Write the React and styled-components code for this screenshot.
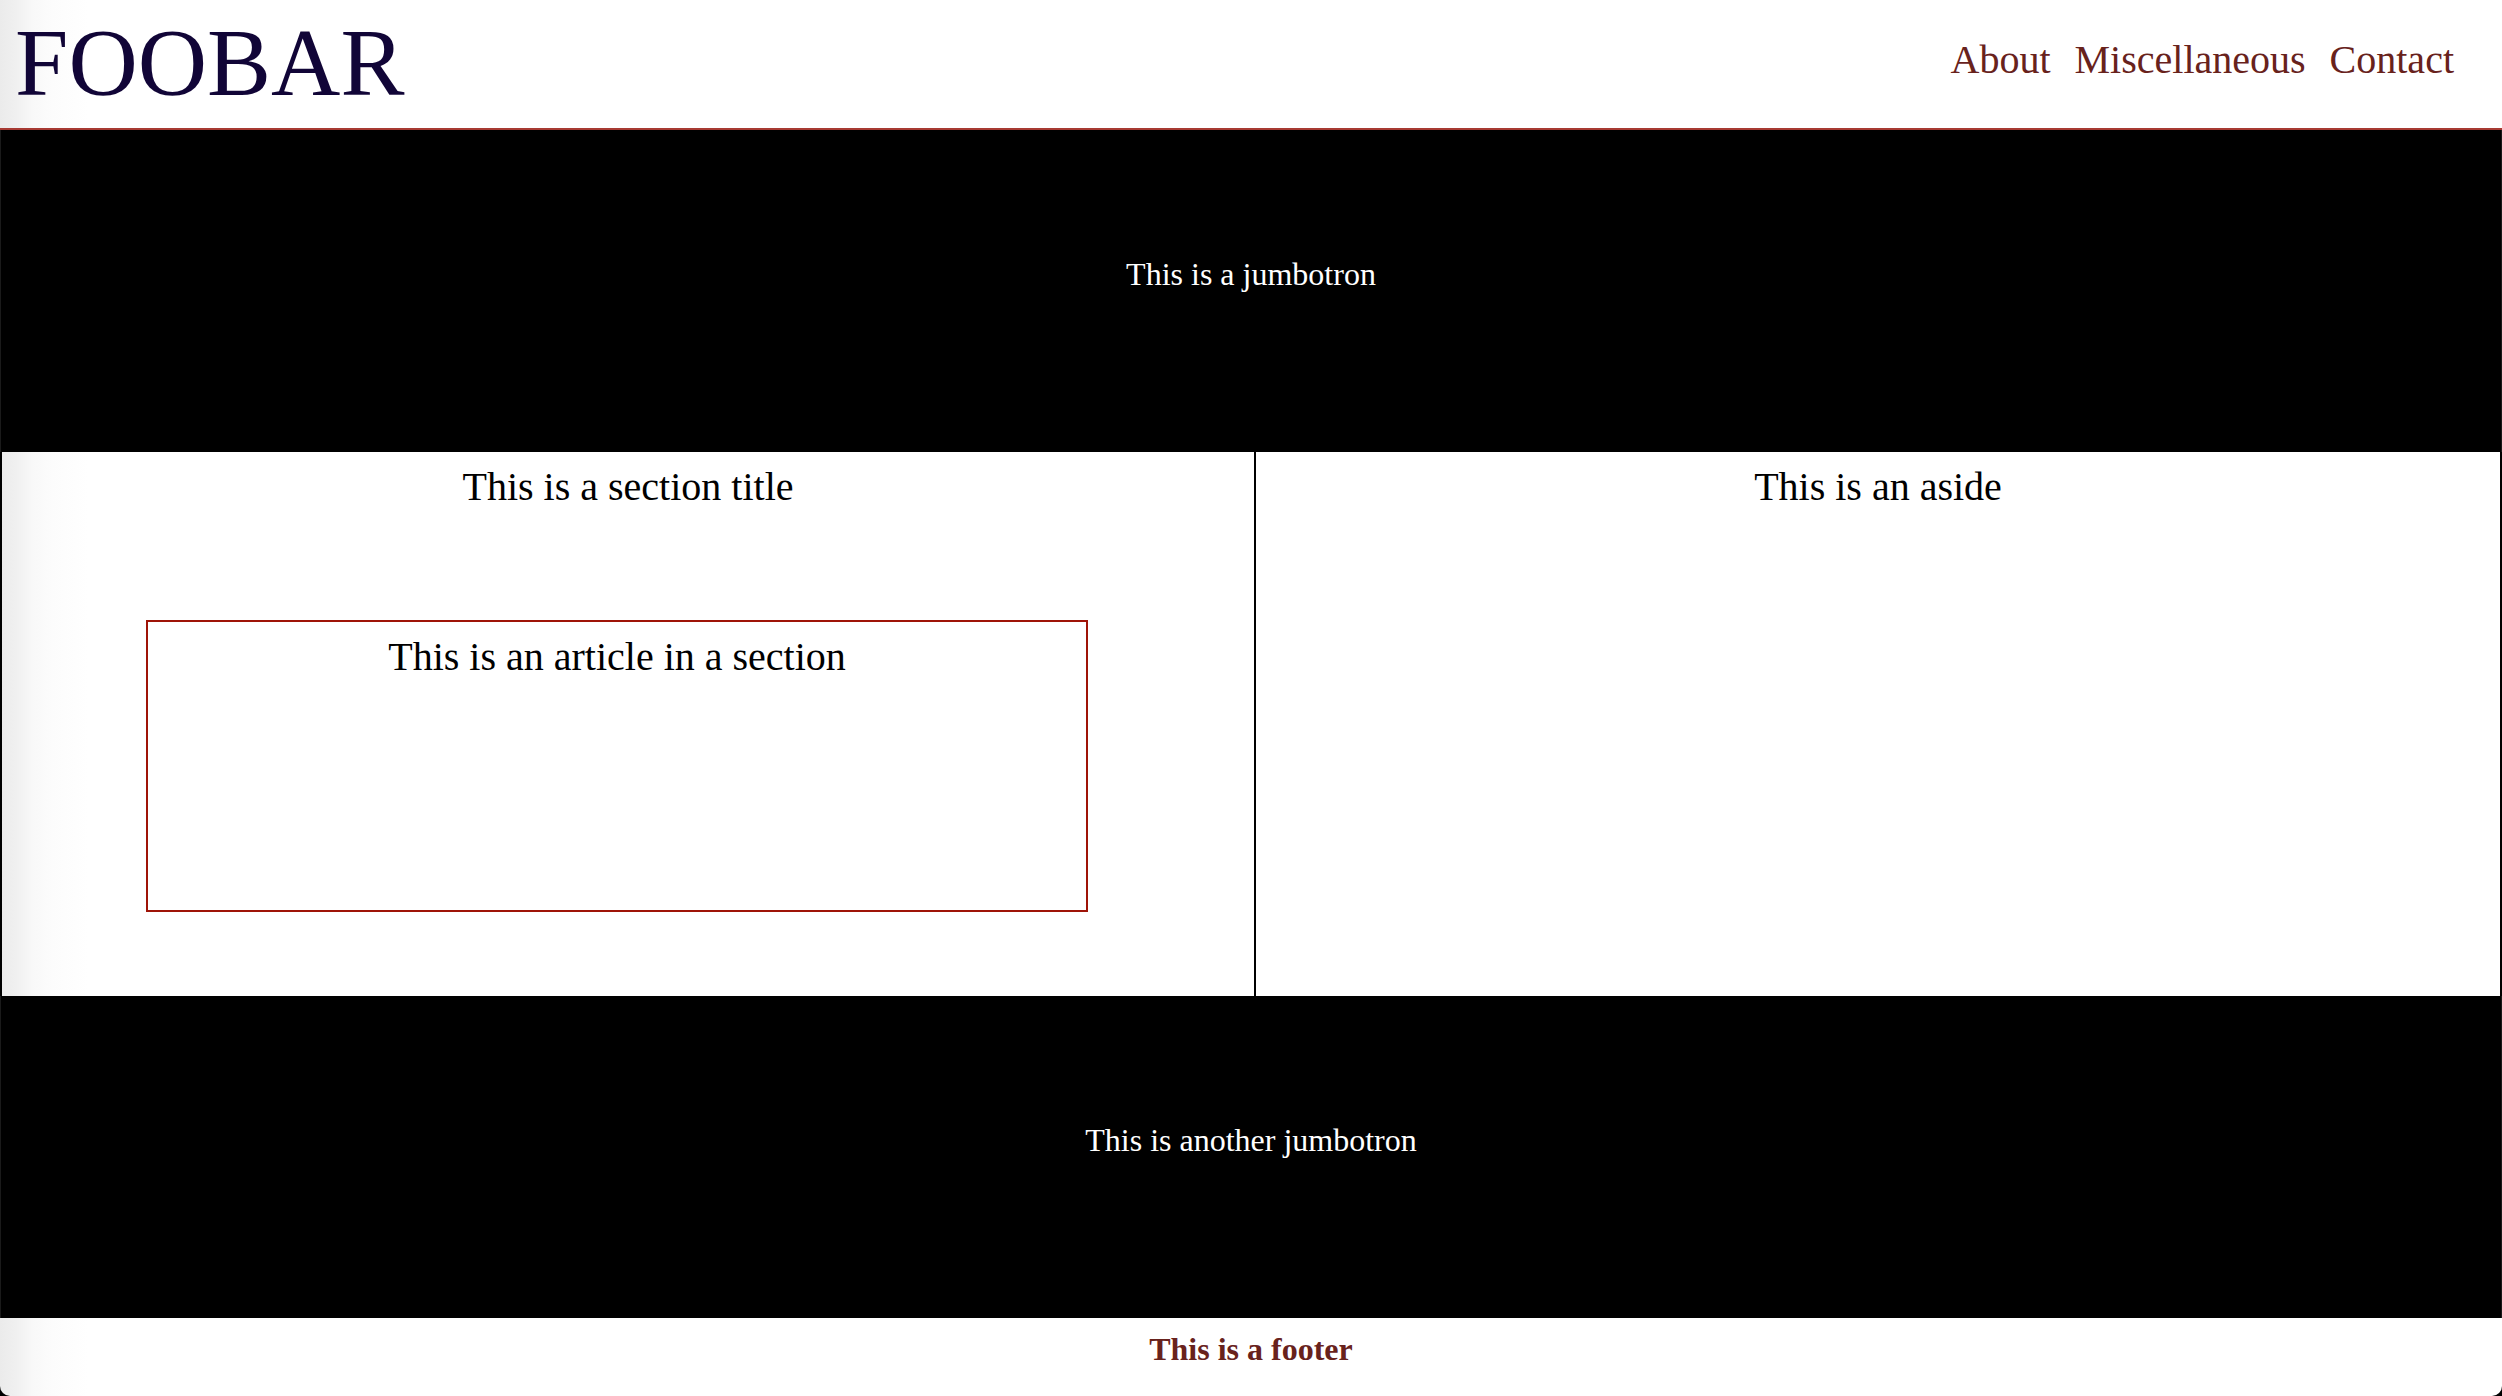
import React from 'react';
import styled, { createGlobalStyle } from 'styled-components';

const Global = createGlobalStyle`
  * { box-sizing: border-box; }
  html { background: #000; }
  body { margin: 0; font-family: "Liberation Serif", "Times New Roman", serif; color: #000; }
`;
const Page = styled.div`
  min-height: 100vh;
  display: flex;
  flex-direction: column;
  background: linear-gradient(to right, #ebebeb, #f0f0f0 16px, #f8f8f8 32px, #fcfcfc 52px, #fefefe 76px, #fff 88px);
  border-radius: 0 0 10px 10px;
`;
const Header = styled.header`
  display: flex;
  justify-content: space-between;
  height: 130px;
  padding: 8px 48px 0 15px;
  border-bottom: 2px solid #a73a33;
`;
const Brand = styled.h1`
  margin: 0;
  font-size: 96px;
  line-height: 110px;
  font-weight: 400;
  color: #110537;
`;
const Nav = styled.nav`
  display: flex;
  gap: 24px;
  padding-top: 28px;
`;
const NavLink = styled.a`
  font-size: 40px;
  line-height: 48px;
  color: #68221c;
  text-decoration: none;
`;
const Jumbotron = styled.section`
  display: flex;
  align-items: center;
  justify-content: center;
  height: 322px;
  padding-bottom: 34px;
  border: solid #1a1a1a;
  border-width: 0 1px;
  background: #000;
  color: #fff;
  font-size: 32px;
  line-height: 36px;
`;
const Columns = styled.main`
  display: grid;
  grid-template-columns: 1254fr 1244fr;
  height: 544px;
  border: solid #000;
  border-width: 0 2px;
`;
const Title = styled.h2`
  margin: 0;
  font-size: 40px;
  line-height: 46px;
  font-weight: 400;
  text-align: center;
`;
const Section = styled.section`
  padding-top: 12px;
  border-right: 2px solid #000;
`;
const Aside = styled.aside`
  padding-top: 12px;
`;
const Article = styled.article`
  width: 75.25%;
  height: 292px;
  margin: 110px 0 0 11.5%;
  padding-top: 12px;
  border: 2px solid #9f1408;
`;
const Footer = styled.footer`
  padding-top: 13px;
  text-align: center;
  font-size: 32px;
  line-height: 36px;
  font-weight: 700;
  color: #68221c;
`;

export default function App() {
  return (
    <>
      <Global />
      <Page>
        <Header>
          <Brand>FOOBAR</Brand>
          <Nav>
            <NavLink href="#about">About</NavLink>
            <NavLink href="#misc">Miscellaneous</NavLink>
            <NavLink href="#contact">Contact</NavLink>
          </Nav>
        </Header>
        <Jumbotron>This is a jumbotron</Jumbotron>
        <Columns>
          <Section>
            <Title>This is a section title</Title>
            <Article>
              <Title>This is an article in a section</Title>
            </Article>
          </Section>
          <Aside>
            <Title>This is an aside</Title>
          </Aside>
        </Columns>
        <Jumbotron>This is another jumbotron</Jumbotron>
        <Footer>This is a footer</Footer>
      </Page>
    </>
  );
}
